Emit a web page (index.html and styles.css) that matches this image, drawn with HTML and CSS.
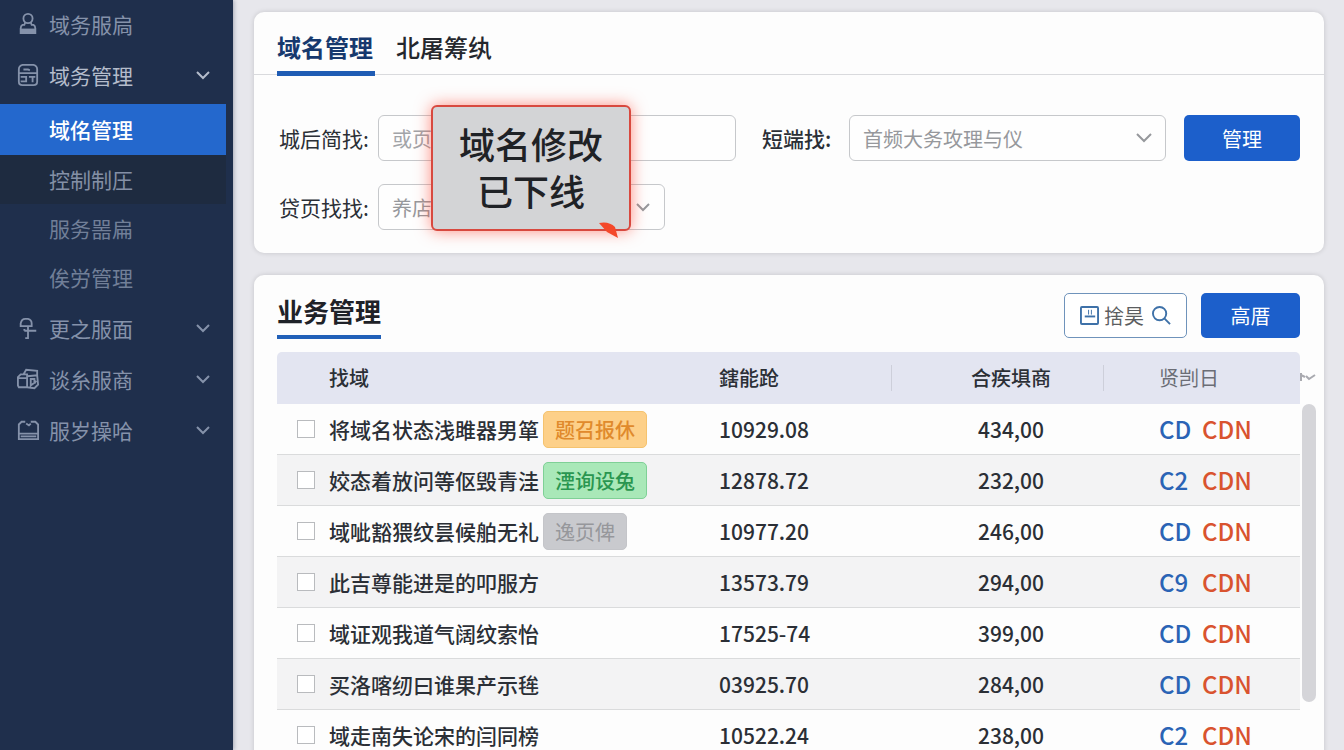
FILE: index.html
```html
<!DOCTYPE html>
<html lang="zh-CN">
<head>
    <meta charset="UTF-8">
    <meta name="viewport" content="width=device-width, initial-scale=1.0">
    <title>域名管理</title>
    <link rel="stylesheet" href="styles.css">
</head>
<body>
    <div class="layout">
        <nav class="sidebar">
            <a class="nav-item" href="#">
                <svg class="nav-icon" viewBox="0 0 24 24"><circle cx="12" cy="6" r="5"/><path d="M9 10l-1 3H6q-2 1-2 4v5h16v-5q0-3-2-4h-2l-1-3"/><path class="solid" d="M4 17h16v5H4z"/></svg>
                <span>域务服扃</span>
            </a>
            <button class="nav-item open" type="button">
                <svg class="nav-icon" viewBox="0 0 24 24"><path d="M6 1h12q4 1 4 5v13q0 4-4 4H6q-4 0-4-4V6q0-4 4-5zM3 10h19M7 6h5l2 1M4 14h6v5H4M13 14h7M17 14v6"/></svg>
                <span>域务管理</span>
                <svg class="chevron" viewBox="0 0 16 10"><path d="M2 2l6 6 6-6"/></svg>
            </button>
            <div class="submenu">
                <a class="sub-item active" href="#">域佲管理</a>
                <a class="sub-item hover" href="#">控制制圧</a>
                <a class="sub-item" href="#">服务噐扁</a>
                <a class="sub-item" href="#">俟労管理</a>
            </div>
            <button class="nav-item" type="button">
                <svg class="nav-icon" viewBox="0 0 24 24"><path d="M4 10V7q1-5 5-5h3q4 1 4 5v3zM12 10v13M8 15h13M8 15v-2M9 23h4"/></svg>
                <span>更之服面</span>
                <svg class="chevron" viewBox="0 0 16 10"><path d="M2 2l6 6 6-6"/></svg>
            </button>
            <button class="nav-item" type="button">
                <svg class="nav-icon" viewBox="0 0 24 24"><path d="M1 10l3-3h7v14H2l-1-2zM1 11h10M7 7l3-5 12 1v5M11 9l11-1 1 10-4 4-8-1M15 12h4v4l-4 3zM19 17l2-3"/></svg>
                <span>谈糸服商</span>
                <svg class="chevron" viewBox="0 0 16 10"><path d="M2 2l6 6 6-6"/></svg>
            </button>
            <button class="nav-item" type="button">
                <svg class="nav-icon" viewBox="0 0 24 24"><path d="M9 3H5L2 6v16h21V6l-3-3h-5M10 5l3 2 2-2M2 16h21M4 19h17"/></svg>
                <span>服岁操哈</span>
                <svg class="chevron" viewBox="0 0 16 10"><path d="M2 2l6 6 6-6"/></svg>
            </button>
        </nav>

        <main class="content">
            <section class="card search-card">
                <div class="tabs">
                    <a class="tab active" href="#">域名管理</a>
                    <a class="tab" href="#">北屠筹纨</a>
                </div>
                <form class="search-form">
                    <div class="form-row">
                        <div class="field field-name">
                            <label for="name">城后简找:</label>
                            <input type="text" id="name" placeholder="或页">
                        </div>
                        <div class="field field-type">
                            <label for="type">短端找:</label>
                            <div class="select-box">
                                <select id="type">
                                    <option>首频大务攻理与仪</option>
                                </select>
                                <svg class="chevron" viewBox="0 0 16 10"><path d="M1 1l7 7 7-7"/></svg>
                            </div>
                        </div>
                        <button class="btn primary btn-search" type="button">管理</button>
                    </div>
                    <div class="form-row">
                        <div class="field field-state">
                            <label for="state">贷页找找:</label>
                            <div class="select-box">
                                <select id="state">
                                    <option>养店</option>
                                </select>
                                <svg class="chevron" viewBox="0 0 16 10"><path d="M2 2l6 6 6-6"/></svg>
                            </div>
                        </div>
                    </div>
                </form>
                <!-- notice over the form -->
                <div class="callout">
                    <p>域名修改<br>已下线</p>
                    <svg class="callout-mark" viewBox="0 0 20 16"><path d="M0 1q10-2 16 4l3 11-11-6z"/></svg>
                </div>
            </section>

            <section class="card list-card">
                <div class="list-head">
                    <h2>业务管理</h2>
                    <button class="btn outline" type="button">
                        <svg class="btn-icon" viewBox="0 0 20 20"><rect x="1" y="1" width="18" height="18" rx="1"/><path d="M5 11h11"/><path class="thin" d="M9 4v5M12 4v5"/></svg>
                        <span>捨昊</span>
                        <svg class="btn-icon" viewBox="0 0 20 20"><circle cx="8" cy="8" r="7"/><path d="M13 13l6 6"/></svg>
                    </button>
                    <button class="btn primary btn-add" type="button">高厝</button>
                </div>
                <div class="table-wrap">
                    <table class="list">
                        <colgroup>
                            <col class="col-check">
                            <col class="col-name">
                            <col class="col-code">
                            <col class="col-sum">
                            <col class="col-links">
                        </colgroup>
                        <thead>
                            <tr>
                                <th></th>
                                <th>找域</th>
                                <th>鎋能跄</th>
                                <th class="sum split">合疾埧商</th>
                                <th class="links split">贤剀日</th>
                            </tr>
                        </thead>
                        <tbody>
                            <tr>
                                <td><input type="checkbox" aria-label="1"></td>
                                <td><div class="name">将域名状态浅雎器男箪<span class="tag orange">题召报休</span></div></td>
                                <td>10929.08</td>
                                <td class="sum">434,00</td>
                                <td class="links"><a href="#">CD</a><a class="red" href="#">CDN</a></td>
                            </tr>
                            <tr>
                                <td><input type="checkbox" aria-label="2"></td>
                                <td><div class="name">姣态着放问等伛毁青洼<span class="tag green">湮询设兔</span></div></td>
                                <td>12878.72</td>
                                <td class="sum">232,00</td>
                                <td class="links"><a href="#">C2</a><a class="red" href="#">CDN</a></td>
                            </tr>
                            <tr>
                                <td><input type="checkbox" aria-label="3"></td>
                                <td><div class="name">域呲豁猥纹昙候舶无礼<span class="tag gray">逸页俾</span></div></td>
                                <td>10977.20</td>
                                <td class="sum">246,00</td>
                                <td class="links"><a href="#">CD</a><a class="red" href="#">CDN</a></td>
                            </tr>
                            <tr>
                                <td><input type="checkbox" aria-label="4"></td>
                                <td><div class="name">此吉尊能进是的叩服方</div></td>
                                <td>13573.79</td>
                                <td class="sum">294,00</td>
                                <td class="links"><a href="#">C9</a><a class="red" href="#">CDN</a></td>
                            </tr>
                            <tr>
                                <td><input type="checkbox" aria-label="5"></td>
                                <td><div class="name">域证观我道气阔纹索怡</div></td>
                                <td>17525-74</td>
                                <td class="sum">399,00</td>
                                <td class="links"><a href="#">CD</a><a class="red" href="#">CDN</a></td>
                            </tr>
                            <tr>
                                <td><input type="checkbox" aria-label="6"></td>
                                <td><div class="name">买洛喀纫曰谁果产示毪</div></td>
                                <td>03925.70</td>
                                <td class="sum">284,00</td>
                                <td class="links"><a href="#">CD</a><a class="red" href="#">CDN</a></td>
                            </tr>
                            <tr>
                                <td><input type="checkbox" aria-label="7"></td>
                                <td><div class="name">域走南失论宋的闫同榜</div></td>
                                <td>10522.24</td>
                                <td class="sum">238,00</td>
                                <td class="links"><a href="#">C2</a><a class="red" href="#">CDN</a></td>
                            </tr>
                        </tbody>
                    </table>
                    <div class="rail">
                        <svg class="rail-mark" viewBox="0 0 16 10"><path d="M1 1v8M1 3l4 2M6 4l3 3 6-4"/></svg>
                        <div class="thumb"></div>
                    </div>
                </div>
            </section>
        </main>
    </div>
</body>
</html>
```
FILE: styles.css
```css
* {
    box-sizing: border-box;
}

body {
    margin: 0;
    font-family: "Noto Sans CJK SC", sans-serif;
    font-size: 21px;
    line-height: 30px;
    color: #2b2f36;
    background-color: #e7e7ec;
}

a {
    text-decoration: none;
}

button,
input,
select {
    font-family: inherit;
    font-size: 20px;
}

svg {
    fill: none;
    stroke: currentColor;
    stroke-width: 2;
    flex: none;
}

.layout {
    display: flex;
    height: 100vh;
}

/* sidebar */
.sidebar {
    width: 233px;
    flex: none;
    background-color: #1f2f4c;
    box-shadow: 1px 0 4px rgba(20, 30, 60, 0.3);
}

.nav-item {
    display: flex;
    align-items: center;
    width: 100%;
    height: 51px;
    padding: 0 22px 3px 17px;
    border: none;
    background: none;
    color: #8592aa;
    font-size: 21px;
    text-align: left;
    cursor: pointer;
}

.nav-item span {
    flex: 1;
    margin-left: 10px;
}

.nav-item.open {
    color: #b4bccb;
}

.nav-icon {
    width: 22px;
    height: 22px;
    color: #8592aa;
}

.nav-icon .solid {
    fill: currentColor;
    stroke: none;
}

.chevron {
    width: 16px;
    height: 10px;
}

.submenu {
    padding: 2px 0;
}

.sub-item {
    display: flex;
    align-items: center;
    height: 49px;
    padding: 0 0 2px 49px;
    margin-right: 7px;
    color: #717f98;
}

.sub-item.active {
    height: 51px;
    background-color: #2468cd;
    color: white;
    font-weight: 500;
}

.sub-item.hover {
    background-color: #1e2b40;
    color: #8490a6;
}

/* content */
.content {
    flex: 1;
    min-width: 0;
    padding: 12px 20px 0 21px;
    overflow-y: auto;
    scrollbar-width: none;
}

.card {
    background-color: #fdfdfd;
    border-radius: 10px;
    box-shadow: 0 0 5px rgba(0, 0, 0, 0.15);
}

.search-card {
    position: relative;
    margin-bottom: 22px;
    padding-bottom: 23px;
}

.tabs {
    display: flex;
    gap: 21px;
    height: 63px;
    padding: 0 23px;
    border-bottom: 1px solid #d9dadd;
}

.tab {
    height: 64px;
    padding-top: 20px;
    color: #24272d;
    font-size: 24px;
    font-weight: 500;
}

.tab.active {
    padding-right: 2px;
    color: #17396e;
    font-weight: bold;
    border-bottom: 5px solid #1f5cb4;
}

.search-form {
    display: flex;
    flex-direction: column;
    gap: 23px;
    padding: 40px 24px 0 25px;
}

.form-row {
    display: flex;
}

.field {
    display: flex;
    align-items: center;
}

.field label {
    flex: none;
    width: 99px;
}

.field-name {
    flex: 457;
    margin-right: 26px;
}

.field-type {
    flex: 404;
    margin-right: 18px;
}

.field-type label {
    width: 87px;
    font-weight: 500;
}

.field-state {
    width: 386px;
}

.field input,
.field select {
    width: 100%;
    min-width: 0;
    height: 46px;
    padding: 0 13px;
    border: 1px solid #c6c8cb;
    border-radius: 6px;
    background-color: #fefefe;
    color: #96989c;
    appearance: none;
}

.field input::placeholder {
    color: #a2a4a8;
}

.select-box {
    position: relative;
    flex: 1;
}

.select-box .chevron {
    position: absolute;
    right: 14px;
    top: 18px;
    color: #96989c;
    pointer-events: none;
}

.btn {
    display: flex;
    align-items: center;
    justify-content: center;
    gap: 5px;
    border: none;
    border-radius: 5px;
    padding: 0;
    cursor: pointer;
}

.btn.primary {
    background-color: #1c5fcb;
    color: white;
}

.btn-search {
    width: 116px;
    height: 46px;
}

.callout {
    position: absolute;
    left: 177px;
    top: 93px;
    width: 200px;
    height: 126px;
    padding-top: 13px;
    border: 2px solid #d8493f;
    border-radius: 6px;
    background-color: #d3d4d6;
    box-shadow: 0 0 16px rgba(255, 70, 50, 0.6);
    color: #1f2226;
    font-size: 36px;
    font-weight: 500;
    line-height: 47px;
    text-align: center;
}

.callout p {
    margin: 0;
}

.callout-mark {
    position: absolute;
    right: 10px;
    bottom: -9px;
    width: 20px;
    height: 16px;
    fill: #f4482a;
    stroke: none;
}

/* list */
.list-card {
    padding: 18px 8px 20px 23px;
}

.list-head {
    display: flex;
    align-items: flex-start;
    gap: 14px;
    margin-right: 16px;
    margin-bottom: 13px;
}

.list-head h2 {
    height: 46px;
    margin: 0 auto 0 0;
    padding-top: 3px;
    border-bottom: 4px solid #2160b8;
    color: #1f2228;
    font-size: 26px;
    font-weight: bold;
    line-height: 30px;
}

.btn.outline {
    width: 123px;
    height: 45px;
    border: 1px solid #6f93bb;
    background-color: white;
    color: #5b5d60;
}

.btn.outline span {
    margin-right: 3px;
}

.btn-icon {
    width: 19px;
    height: 19px;
    color: #3e71a8;
}

.btn-icon .thin {
    stroke-width: 1;
}

.btn-add {
    width: 99px;
    height: 45px;
}

.table-wrap {
    display: flex;
}

.list {
    flex: 1;
    width: 100%;
    table-layout: fixed;
    border-collapse: separate;
    border-spacing: 0;
}

.col-check {
    width: 52px;
}

.col-code {
    width: 172px;
}

.col-sum {
    width: 212px;
}

.col-links {
    width: 197px;
}

.list th,
.list td {
    height: 51px;
    padding: 0;
    text-align: left;
    white-space: nowrap;
}

.list th {
    height: 52px;
    background-color: #e3e5f1;
    font-size: 20px;
    font-weight: 500;
}

.list th:first-child {
    border-top-left-radius: 5px;
}

.list th:last-child {
    border-top-right-radius: 5px;
    color: #6b6d75;
    font-weight: normal;
}

.list th.split {
    background-image: linear-gradient(#cdcfda, #cdcfda);
    background-size: 1px 26px;
    background-position: left center;
    background-repeat: no-repeat;
}

.list td {
    border-bottom: 1px solid #dadbdc;
    font-weight: 500;
}

.list tbody tr:nth-child(even) {
    background-color: #f3f3f4;
}

.list .sum {
    padding-left: 28px;
    text-align: center;
}

.list .links {
    padding-left: 56px;
}

.list td input {
    display: block;
    width: 18px;
    height: 18px;
    margin: 0 0 0 20px;
    border: 1px solid #b9bbbe;
    background-color: white;
    appearance: none;
}

.links a {
    display: inline-block;
    min-width: 43px;
    color: #2a63b5;
    font-size: 24px;
}

.links a.red {
    color: #d9532f;
}

.name {
    display: flex;
    align-items: center;
    gap: 4px;
}

.tag {
    padding: 2px 11px;
    border: 1px solid;
    border-radius: 5px;
    font-size: 20px;
    line-height: 31px;
}

.tag.orange {
    border-color: #f5c36f;
    background-color: #fdd089;
    color: #e08a2c;
}

.tag.green {
    border-color: #7fd096;
    background-color: #a9e8b8;
    color: #2a9650;
}

.tag.gray {
    border-color: #c4c5c9;
    background-color: #c9cace;
    color: #96979b;
    font-weight: normal;
}

.rail {
    width: 16px;
}

.rail-mark {
    display: block;
    width: 16px;
    height: 10px;
    margin: 20px 0 22px;
    color: #a9aab0;
}

.thumb {
    width: 14px;
    height: 298px;
    margin-left: 2px;
    border-radius: 7px;
    background-color: #d5d5d9;
}
```
